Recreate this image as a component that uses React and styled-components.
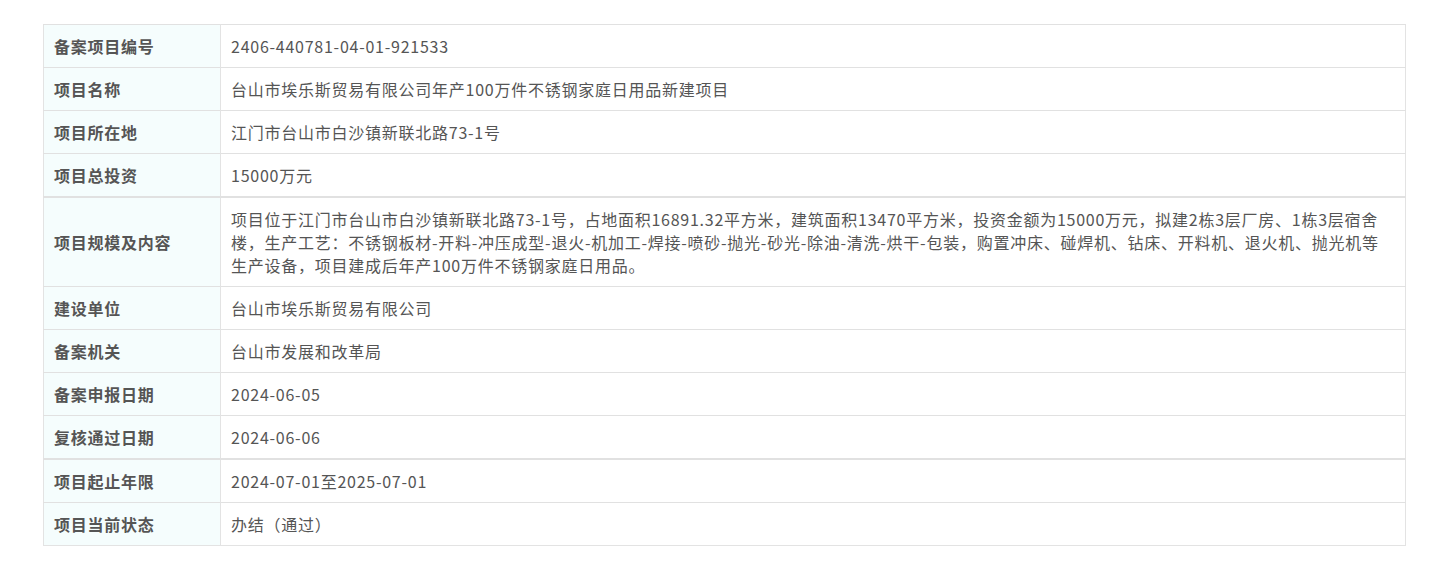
import React from 'react';
import styled, { createGlobalStyle } from 'styled-components';

const GlobalStyle = createGlobalStyle`
  body {
    margin: 0;
    background: #fff;
    font-family: "Noto Sans CJK SC", "Noto Sans", sans-serif;
  }
`;

const Page = styled.div`
  padding: 24px 23px 30px 43px;
`;

const Table = styled.table`
  width: 1363px;
  border-collapse: collapse;
  table-layout: fixed;
  border: 1px solid #e3e3e3;
`;

const Row = styled.tr`
  border-top: ${p => (p.$thick ? '2px' : '1px')} solid #e1e1e1;
`;

const Label = styled.th`
  width: 166px;
  padding: 10px 0 9px 10px;
  background: #f5fdfd;
  border-right: 1px solid #e3e3e3;
  text-align: left;
  font-size: 16px;
  line-height: 23px;
  letter-spacing: 0.75px;
  font-weight: 700;
  color: #555;
  white-space: nowrap;
`;

const Value = styled.td`
  padding: 10px 10px 9px;
  font-size: 16px;
  line-height: 23px;
  letter-spacing: 0.75px;
  color: #555;
  text-align: left;
`;

const rows = [
  ['备案项目编号', '2406-440781-04-01-921533'],
  ['项目名称', '台山市埃乐斯贸易有限公司年产100万件不锈钢家庭日用品新建项目'],
  ['项目所在地', '江门市台山市白沙镇新联北路73-1号'],
  ['项目总投资', '15000万元'],
  [
    '项目规模及内容',
    '项目位于江门市台山市白沙镇新联北路73-1号，占地面积16891.32平方米，建筑面积13470平方米，投资金额为15000万元，拟建2栋3层厂房、1栋3层宿舍楼，生产工艺：不锈钢板材-开料-冲压成型-退火-机加工-焊接-喷砂-抛光-砂光-除油-清洗-烘干-包装，购置冲床、碰焊机、钻床、开料机、退火机、抛光机等生产设备，项目建成后年产100万件不锈钢家庭日用品。',
    true,
  ],
  ['建设单位', '台山市埃乐斯贸易有限公司'],
  ['备案机关', '台山市发展和改革局'],
  ['备案申报日期', '2024-06-05'],
  ['复核通过日期', '2024-06-06'],
  ['项目起止年限', '2024-07-01至2025-07-01', true],
  ['项目当前状态', '办结（通过）'],
];

export default function App() {
  return (
    <>
      <GlobalStyle />
      <Page>
        <Table>
          <tbody>
            {rows.map(([k, v, thick]) => (
              <Row key={k} $thick={thick}>
                <Label>{k}</Label>
                <Value>{v}</Value>
              </Row>
            ))}
          </tbody>
        </Table>
      </Page>
    </>
  );
}
